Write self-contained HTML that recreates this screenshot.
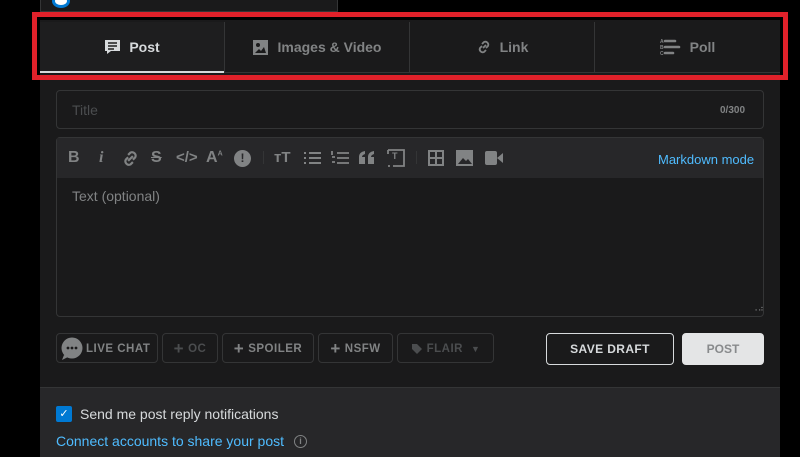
<!DOCTYPE html>
<html><head><meta charset="utf-8"><style>
*{box-sizing:border-box;margin:0;padding:0}
body{width:800px;height:457px;background:#000;position:relative;overflow:hidden;font-family:"Liberation Sans",sans-serif}
.abs{position:absolute}
.top{left:40px;top:-2px;width:298px;height:14px;background:#1a1a1b;border:1px solid #343536;border-top:none}
.panel{left:40px;top:20px;width:740px;height:437px;background:#1a1a1b}
.red{left:32px;top:12px;width:756px;height:68px;border:5px solid #e0212a}
.tab{position:absolute;top:22px;height:51px;display:flex;align-items:center;justify-content:center;gap:8px;color:#818384;font-weight:bold;font-size:14px;border-bottom:1px solid #343536}
.sep{border-left:1px solid #343536}
.inp{border:1px solid #343536;border-radius:4px}
.tb{color:#818384;font-weight:bold;font-size:16px;position:absolute;top:149px}
.pill{position:absolute;top:333px;height:30px;border:1px solid #343536;border-radius:4px;color:#818384;font-weight:bold;font-size:11.5px;letter-spacing:.5px;display:flex;align-items:center;justify-content:center;gap:4px;padding-top:2px}
</style></head><body>
<div class="abs top"><div class="abs" style="left:11px;top:-4px;width:18px;height:14px;border:3px solid #0079d3;border-radius:50%;background:#fff"></div></div>
<div class="abs panel"></div>
<div class="tab" style="left:40px;width:184px;color:#d7dadc;background:#1e1e1f;border-bottom:2px solid #d7dadc">
<svg width="17" height="17" viewBox="0 0 17 17"><path d="M1 2h15v11H7l-4 3v-3H1z" fill="#d7dadc"/><path d="M4 5h9M4 8h9M4 11h6" stroke="#1e1e1f" stroke-width="1.4"/></svg>Post</div>
<div class="tab sep" style="left:224px;width:185px">
<svg width="17" height="17" viewBox="0 0 17 17"><rect x="1" y="1" width="15" height="15" fill="#818384"/><circle cx="6" cy="6" r="2" fill="#1a1a1b"/><path d="M3 14l4-4 2 2 3-4 2 6z" fill="#1a1a1b"/></svg>Images &amp; Video</div>
<div class="tab sep" style="left:409px;width:185px">
<svg width="16" height="16" viewBox="0 0 16 16" fill="none" stroke="#818384" stroke-width="1.8"><path d="M7 9l3-3M6 5l2-2a3 3 0 014 4l-2 2M10 11l-2 2a3 3 0 01-4-4l2-2"/></svg>Link</div>
<div class="tab sep" style="left:594px;width:186px">
<svg width="22" height="18" viewBox="0 0 22 18"><text x="0" y="5" font-size="5" fill="#818384">A</text><text x="0" y="11" font-size="5" fill="#818384">B</text><text x="0" y="17" font-size="5" fill="#818384">C</text><path d="M5 3h10M5 9h14M5 15h8" stroke="#818384" stroke-width="2.6" stroke-linecap="round"/></svg>Poll</div>
<div class="abs red"></div>

<div class="abs inp" style="left:56px;top:90px;width:708px;height:39px"></div>
<div class="abs" style="left:72px;top:102px;color:#4b4d4f;font-size:14px">Title</div>
<div class="abs" style="left:720px;top:105px;color:#818384;font-size:10px;font-weight:bold">0/300</div>

<div class="abs inp" style="left:56px;top:137px;width:708px;height:180px"></div>
<div class="abs" style="left:57px;top:138px;width:706px;height:40px;background:#272729"></div>
<div class="tb" style="left:68px">B</div>
<div class="tb" style="left:99px;font-style:italic;font-family:'Liberation Serif',serif">i</div>
<svg class="abs" style="left:121px;top:149px" width="19" height="19" viewBox="0 0 16 16" fill="none" stroke="#818384" stroke-width="1.8"><path d="M6 10l4-4M6 5l2-2a3 3 0 014 4l-2 2M10 11l-2 2a3 3 0 01-4-4l2-2"/></svg>
<div class="tb" style="left:151px;text-decoration:line-through">S</div>
<div class="tb" style="left:176px;font-size:15px">&lt;/&gt;</div>
<div class="tb" style="left:206px">A<sup style="font-size:7px">A</sup></div>
<div class="abs" style="left:234px;top:150px;width:17px;height:17px;border-radius:50%;background:#818384;color:#272729;font-weight:bold;font-size:12px;text-align:center;line-height:17px">!</div>
<div class="abs" style="left:263px;top:151px;width:1px;height:13px;background:#343536"></div>
<div class="tb" style="left:274px;font-size:15px">ᴛT</div>
<svg class="abs" style="left:303px;top:150px" width="18" height="16"><path d="M6 3h12M6 8h12M6 13h12" stroke="#818384" stroke-width="2"/><path d="M1 3h2M1 8h2M1 13h2" stroke="#818384" stroke-width="2"/></svg>
<svg class="abs" style="left:331px;top:150px" width="18" height="16"><path d="M6 3h12M6 8h12M6 13h12M1 1v4M1 7h3M1 12h3" stroke="#818384" stroke-width="1.8"/></svg>
<svg class="abs" style="left:359px;top:151px" width="17" height="13"><path d="M0 13V6q0-5 6-6v3q-3 1-3 3h3v7zM9 13V6q0-5 6-6v3q-3 1-3 3h3v7z" fill="#818384"/></svg>
<svg class="abs" style="left:387px;top:149px" width="18" height="18" fill="none" stroke="#818384" stroke-width="1.8"><path d="M1 1h16v16H6M1 1v4M1 17h2"/><text x="5" y="10" font-size="9" fill="#818384" stroke="none" font-weight="bold">T</text></svg>
<div class="abs" style="left:416px;top:151px;width:1px;height:13px;background:#343536"></div>
<svg class="abs" style="left:428px;top:150px" width="16" height="16"><rect x="1" y="1" width="14" height="14" fill="none" stroke="#818384" stroke-width="2"/><path d="M8 1v14M1 8h14" stroke="#818384" stroke-width="2"/></svg>
<svg class="abs" style="left:456px;top:150px" width="17" height="16"><rect width="17" height="16" fill="#818384"/><path d="M2 14l5-6 3 3 2-2 4 5z" fill="#272729"/></svg>
<svg class="abs" style="left:485px;top:151px" width="18" height="14"><rect width="12" height="14" rx="2" fill="#818384"/><path d="M12 7l6-5v10z" fill="#818384"/></svg>
<div class="abs" style="left:658px;top:152px;color:#4fbcff;font-size:13px">Markdown mode</div>
<div class="abs" style="left:72px;top:188px;color:#818384;font-size:14px">Text (optional)</div>
<div class="abs" style="left:752px;top:305px;color:#818384;font-size:8px;line-height:8px">⠠⠴</div>

<div class="pill" style="left:56px;width:102px;color:#818384;justify-content:flex-start;padding-left:3px;gap:2px"><svg width="24" height="24"><circle cx="12" cy="11" r="10.5" fill="#818384"/><path d="M4 18l-2 5 6-3z" fill="#818384"/><circle cx="8" cy="11" r="1.4" fill="#1a1a1b"/><circle cx="12" cy="11" r="1.4" fill="#1a1a1b"/><circle cx="16" cy="11" r="1.4" fill="#1a1a1b"/></svg>LIVE CHAT</div>
<div class="pill" style="left:162px;width:56px;color:#4b4d4f"><span style="font-size:17px">+</span>OC</div>
<div class="pill" style="left:222px;width:92px"><span style="font-size:17px">+</span>SPOILER</div>
<div class="pill" style="left:318px;width:75px"><span style="font-size:17px">+</span>NSFW</div>
<div class="pill" style="left:397px;width:97px;color:#4b4d4f"><svg width="12" height="12"><path d="M1 1h5l5 5-5 5-5-5z" fill="#4b4d4f"/></svg>FLAIR <span style="font-size:9px;margin-left:4px">▼</span></div>

<div class="abs" style="left:546px;top:333px;width:128px;height:32px;border:1px solid #d7dadc;border-radius:4px;color:#d7dadc;font-weight:bold;font-size:12px;text-align:center;line-height:30px;letter-spacing:.4px">SAVE DRAFT</div>
<div class="abs" style="left:682px;top:333px;width:82px;height:32px;background:#e4e5e6;border-radius:4px;color:#888a8c;font-weight:bold;font-size:12px;text-align:center;line-height:32px">POST</div>

<div class="abs" style="left:40px;top:387px;width:740px;height:70px;background:#272729;border-top:1px solid #343536"></div>
<div class="abs" style="left:56px;top:406px;width:16px;height:16px;background:#0079d3;border-radius:2px;color:#fff;font-size:11px;text-align:center;line-height:16px">✓</div>
<div class="abs" style="left:80px;top:406px;color:#d7dadc;font-size:14px">Send me post reply notifications</div>
<div class="abs" style="left:56px;top:433px;color:#4fbcff;font-size:14px">Connect accounts to share your post</div>
<div class="abs" style="left:294px;top:435px;width:13px;height:13px;border:1.5px solid #818384;border-radius:50%;color:#818384;font-size:9px;text-align:center;line-height:10px;font-weight:bold">i</div>
</body></html>
